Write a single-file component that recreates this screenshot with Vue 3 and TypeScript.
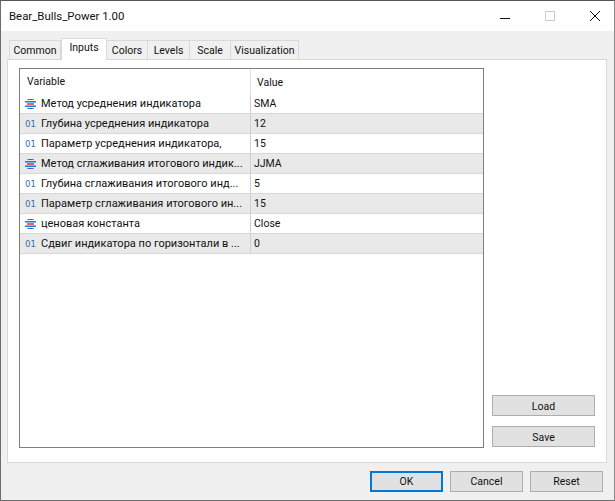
<script setup lang="ts">
interface Row { icon: 'enum' | 'num'; name: string; value: string }
const tabs = ['Common', 'Inputs', 'Colors', 'Levels', 'Scale', 'Visualization']
const rows: Row[] = [
  { icon: 'enum', name: 'Метод усреднения индикатора', value: 'SMA' },
  { icon: 'num', name: 'Глубина усреднения индикатора', value: '12' },
  { icon: 'num', name: 'Параметр усреднения индикатора,', value: '15' },
  { icon: 'enum', name: 'Метод сглаживания итогового индик...', value: 'JJMA' },
  { icon: 'num', name: 'Глубина сглаживания итогового инд...', value: '5' },
  { icon: 'num', name: 'Параметр сглаживания итогового ин...', value: '15' },
  { icon: 'enum', name: 'ценовая константа', value: 'Close' },
  { icon: 'num', name: 'Сдвиг индикатора по горизонтали в ...', value: '0' },
]
</script>

<template>
  <div class="window">
    <div class="titlebar">
      <span class="title">Bear_Bulls_Power 1.00</span>
      <div class="controls">
        <svg width="12" height="12" viewBox="0 0 12 12"><path d="M1 8.5H11" stroke="#111" fill="none" /></svg>
        <svg width="12" height="12" viewBox="0 0 12 12"><rect x="1.5" y="1.5" width="9" height="9" stroke="#ccc" fill="none" /></svg>
        <svg width="12" height="12" viewBox="0 0 12 12"><path d="M1 1L11 11M11 1L1 11" stroke="#111" fill="none" /></svg>
      </div>
    </div>
    <div class="body">
      <div class="tabs">
        <div v-for="t in tabs" :key="t" class="tab" :class="{ active: t === 'Inputs' }">{{ t }}</div>
      </div>
      <div class="panel">
        <div class="list">
          <div class="row head">
            <div class="c1">Variable</div>
            <div class="c2">Value</div>
          </div>
          <div v-for="(r, i) in rows" :key="i" class="row item" :class="{ alt: i % 2 === 1 }">
            <div class="c1">
              <svg v-if="r.icon === 'enum'" class="ic" width="11" height="10" viewBox="0 0 11 10">
                <rect x="2.5" y="0" width="6" height="1" fill="#2a6fc4" />
                <rect x="0" y="2" width="11" height="1.5" fill="#1f78e0" />
                <rect x="2" y="4.25" width="7" height="1.5" fill="#e8322c" />
                <rect x="0" y="6.5" width="11" height="1.5" fill="#1f78e0" />
                <rect x="2.5" y="9" width="6" height="1" fill="#2a6fc4" />
              </svg>
              <span v-else class="num">01</span>
              <span class="name">{{ r.name }}</span>
            </div>
            <div class="c2 val">{{ r.value }}</div>
          </div>
        </div>
        <div class="side">
          <button class="btn side-btn">Load</button>
          <button class="btn side-btn">Save</button>
        </div>
      </div>
      <div class="footer">
        <button class="btn foot-btn ok">OK</button>
        <button class="btn foot-btn">Cancel</button>
        <button class="btn foot-btn">Reset</button>
      </div>
    </div>
  </div>
</template>

<style>
html, body { margin: 0; padding: 0; background: #f0f0f0; }
</style>

<style scoped>
.window {
  width: 615px;
  height: 501px;
  box-sizing: border-box;
  border: 1px solid #6d6d6d;
  border-top-color: #555;
  border-right-color: #8a8a8a;
  display: flex;
  flex-direction: column;
  font-family: Roboto, "Noto Sans", sans-serif;
  font-size: 10.5px;
  color: #111;
  background: #f0f0f0;
  overflow: hidden;
}
.titlebar {
  height: 30px;
  background: #fff;
  display: flex;
  align-items: center;
  justify-content: space-between;
  flex: none;
}
.title { margin-left: 8px; font-size: 11.4px; color: #111; }
.controls { display: flex; gap: 33px; margin-right: 13px; align-items: center; margin-top: -1px; }
.body { flex: 1; display: flex; flex-direction: column; padding: 0 7px 0 6px; min-height: 0; }
.tabs { display: flex; height: 28px; align-items: flex-end; padding-left: 2px; flex: none; }
.tab {
  height: 19px;
  line-height: 20px;
  box-sizing: border-box;
  border: 1px solid #d9d9d9;
  border-bottom: none;
  border-left: none;
  background: #f0f0f0;
  text-align: center;
  flex: none;
}
.tab:nth-child(1) { width: 52px; border-left: 1px solid #d9d9d9; }
.tab:nth-child(2) { width: 46px; height: 22px; background: #fff; line-height: 18px; border-left: 1px solid #d9d9d9; margin-bottom: -1px; position: relative; z-index: 1; }
.tab:nth-child(3) { width: 41px; }
.tab:nth-child(4) { width: 42px; }
.tab:nth-child(5) { width: 41px; }
.tab:nth-child(6) { width: 68px; }
.panel {
  height: 404px;
  flex: none;
  box-sizing: border-box;
  background: #fff;
  border: 1px solid #d9d9d9;
  padding: 8px 11px 14px 11px;
  display: flex;
  justify-content: space-between;
}
.list {
  width: 465px;
  box-sizing: border-box;
  border: 1px solid #7f7f7f;
  background: #fff;
}
.row { display: flex; }
.head { height: 25px; line-height: 27px; }
.c1 { width: 231px; box-sizing: border-box; display: flex; align-items: center; flex: none; border-right: 1px solid #e0e0e0; }
.c2 { flex: 1; box-sizing: border-box; }
.head .c1 { padding-left: 7px; }
.head .c2 { padding-left: 6px; }
.item { height: 20px; line-height: 20px; box-sizing: border-box; border-bottom: 1px solid #d8d8d8; }
.item.alt { background: #e9e9e9; }
.item .c1 { border-right: 1px solid #d0d0d0; }
.ic { margin-left: 5px; flex: none; }
.num { margin-left: 5px; width: 11px; font-family: "DejaVu Sans", sans-serif; font-size: 8.5px; color: #2f6fb0; flex: none; }
.name { margin-left: 5px; white-space: nowrap; font-size: 11px; }
.val { padding-left: 3px; }
.side { display: flex; flex-direction: column; justify-content: flex-end; gap: 10px; padding-bottom: 1px; }
.btn {
  box-sizing: border-box;
  background: #e1e1e1;
  border: 1px solid #adadad;
  font: inherit;
  color: #111;
  padding: 0;
}
.side-btn { width: 103px; height: 21px; padding-top: 2px; }
.footer { flex: 1; display: flex; justify-content: flex-end; align-items: flex-start; gap: 7px; padding-right: 4px; padding-top: 8px; }
.foot-btn { width: 73px; height: 21px; }
.ok { border: 2px solid #0078d7; }
</style>
